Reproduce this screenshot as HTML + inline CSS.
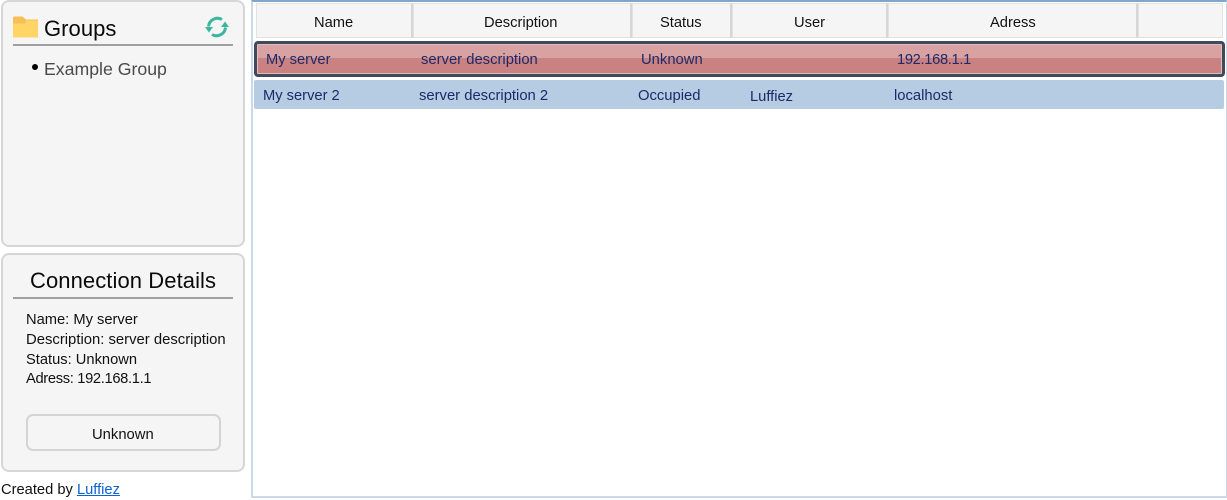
<!DOCTYPE html>
<html><head><meta charset="utf-8">
<style>
html,body{margin:0;padding:0;width:1227px;height:498px;overflow:hidden;background:#fff;font-family:"Liberation Sans",sans-serif;color:#111}
.a{position:absolute;box-sizing:border-box}
.t{position:absolute;white-space:nowrap;line-height:20px;font-size:14.7px}
.panel{position:absolute;box-sizing:border-box;background:#f5f5f5;border:2px solid #d6d6d6;border-radius:8px}
.hd{position:absolute;box-sizing:border-box;top:3px;height:35px;background:#f5f5f5;border:1px solid #e2e2e2;border-right:2px solid #d6d6d6}
.n{color:#1c2a6b}
</style></head><body>
<div class="panel" style="left:1px;top:0;width:244px;height:247px"></div>
<svg class="a" style="left:13px;top:16px" width="26" height="22" viewBox="0 0 26 22"><path d="M0 2a1.500 1.500 0 0 1 1.500-1.500h8L13 3.500V7.500H0z" fill="#f6c057"/><path d="M12.500 3.500H25V7H12z" fill="#f6c057"/><path d="M0 7.500H12l1-3H25V21.500H0z" fill="#ffd566"/></svg>
<div class="t" style="left:44px;top:16px;font-size:22px;line-height:26px;color:#0a0a0a;letter-spacing:.05px">Groups</div>
<svg class="a" style="left:205px;top:16px" width="24" height="22" viewBox="0 0 24 22" fill="none" stroke="#3cb69e" stroke-width="3"><path d="M17 3.500A9 9 0 0 0 3.500 10.500"/><path d="M7 18.500A9 9 0 0 0 20.500 11.500"/><path d="M0 11h8l-4 5.500z" fill="#3cb69e" stroke="none"/><path d="M24 11h-8l4-5.500z" fill="#3cb69e" stroke="none"/></svg>
<div class="a" style="left:13px;top:44px;width:220px;height:2px;background:#a0a0a0"></div>
<div class="a" style="left:32px;top:64px;width:6px;height:6px;border-radius:50%;background:#000"></div>
<div class="t" style="left:44px;top:58px;font-size:17.700px;line-height:22px;color:#4a4a4a">Example Group</div>

<div class="panel" style="left:1px;top:253px;width:244px;height:219px"></div>
<div class="t" style="left:30px;top:268px;font-size:22px;line-height:26px;color:#0a0a0a;letter-spacing:.08px">Connection Details</div>
<div class="a" style="left:13px;top:297px;width:220px;height:2px;background:#a0a0a0"></div>
<div class="t" style="left:26px;top:310px">Name: My server</div>
<div class="t" style="left:26px;top:330px;font-size:14.850px">Description: server description</div>
<div class="t" style="left:26px;top:350px">Status: Unknown</div>
<div class="t" style="left:26px;top:369px;letter-spacing:-.33px">Adress: 192.168.1.1</div>
<div class="a" style="left:26px;top:414px;width:195px;height:37px;border:2px solid #d4d4d4;border-radius:7px;background:#f5f5f5"></div>
<div class="t" style="left:92px;top:425px;font-size:14.800px">Unknown</div>
<div class="t" style="left:1px;top:480px">Created by <span style="color:#0b63ce;text-decoration:underline">Luffiez</span></div>

<div class="a" style="left:251px;top:0;width:976px;height:498px;border:2px solid #c9d9e8;border-top:2px solid #7fa6cc;border-right:1px solid #c9d9e8;border-bottom:2px solid #c9d9e8;background:#fff"></div>
<div class="hd" style="left:256px;width:157px"></div>
<div class="hd" style="left:413px;width:219px"></div>
<div class="hd" style="left:632px;width:100px"></div>
<div class="hd" style="left:732px;width:156px"></div>
<div class="hd" style="left:888px;width:250px"></div>
<div class="hd" style="left:1138px;width:85px;border-right:1px solid #e2e2e2"></div>
<div class="t" style="left:314px;top:13px">Name</div>
<div class="t" style="left:484px;top:13px">Description</div>
<div class="t" style="left:660px;top:13px">Status</div>
<div class="t" style="left:794px;top:13px">User</div>
<div class="t" style="left:990px;top:13px">Adress</div>

<div class="a" style="left:254px;top:41px;width:971px;height:36px;border:3px solid #3f4a5c;border-radius:4px;overflow:hidden;background:#e3bcbc">
<div class="a" style="left:1px;top:1px;right:1px;height:13px;background:#d9a2a2"></div>
<div class="a" style="left:1px;top:14px;right:1px;bottom:1px;background:#c98181"></div>
</div>
<div class="t n" style="left:266px;top:50px">My server</div>
<div class="t n" style="left:421px;top:50px;font-size:14.800px">server description</div>
<div class="t n" style="left:641px;top:50px;font-size:14.800px">Unknown</div>
<div class="t n" style="left:897px;top:50px;letter-spacing:-.33px">192.168.1.1</div>

<div class="a" style="left:254px;top:80px;width:970px;height:29px;background:#b5cce3;border-radius:2px"></div>
<div class="t n" style="left:263px;top:86px">My server 2</div>
<div class="t n" style="left:419px;top:86px;font-size:14.800px">server description 2</div>
<div class="t n" style="left:638px;top:86px;font-size:14.800px">Occupied</div>
<div class="t n" style="left:750px;top:87px">Luffiez</div>
<div class="t n" style="left:894px;top:86px;font-size:14.800px">localhost</div>
</body></html>
